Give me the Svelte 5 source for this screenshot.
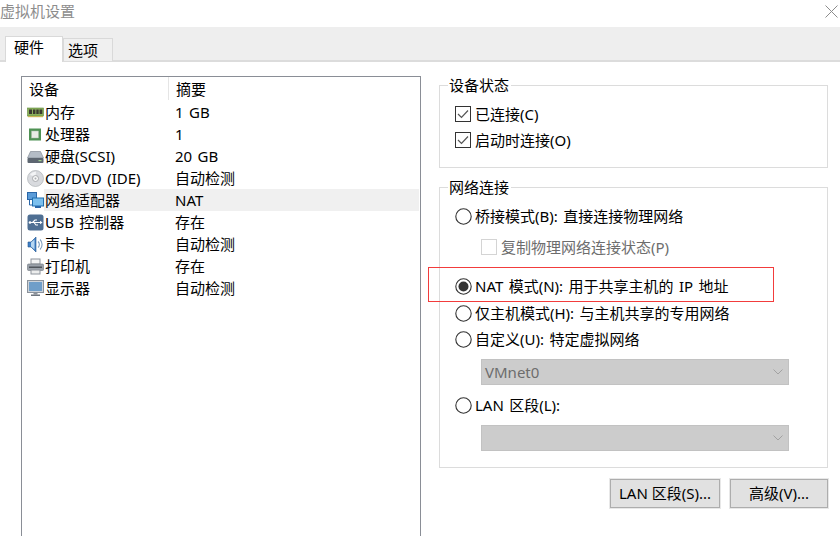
<script>
	const devices = [
		{ icon: 'memory', name: '内存', summary: '1 GB' },
		{ icon: 'cpu', name: '处理器', summary: '1' },
		{ icon: 'disk', name: '硬盘(SCSI)', summary: '20 GB' },
		{ icon: 'cd', name: 'CD/DVD (IDE)', summary: '自动检测' },
		{ icon: 'net', name: '网络适配器', summary: 'NAT', selected: true },
		{ icon: 'usb', name: 'USB 控制器', summary: '存在' },
		{ icon: 'sound', name: '声卡', summary: '自动检测' },
		{ icon: 'printer', name: '打印机', summary: '存在' },
		{ icon: 'display', name: '显示器', summary: '自动检测' }
	];
</script>

{#snippet check()}
	<svg class="box" width="16" height="16" viewBox="0 0 16 16">
		<rect x="0.5" y="0.5" width="15" height="15" fill="#fff" stroke="#333" />
		<path d="M3 8l3.5 3.5L13 4.5" fill="none" stroke="#555" stroke-width="1.2" />
	</svg>
{/snippet}

{#snippet radio(on)}
	<svg class="radio" width="17" height="17" viewBox="0 0 17 17">
		<circle cx="8.5" cy="8.5" r="7.7" fill="#fff" stroke="#333" stroke-width="1.1" />
		{#if on}<circle cx="8.5" cy="8.5" r="5" fill="#333" />{/if}
	</svg>
{/snippet}

{#snippet chevron()}
	<svg class="chev" width="10" height="6" viewBox="0 0 10 6">
		<path d="M0.5 0.5L5 5l4.5-4.5" fill="none" stroke="#a2a2a2" />
	</svg>
{/snippet}

{#snippet deviceIcon(kind)}
	<svg class="dev-icon" width="17" height="17" viewBox="0 0 17 17">
		{#if kind === 'memory'}
			<rect x="0.5" y="4" width="16" height="8" fill="#8bb05c" stroke="#5f8a3a" stroke-width="0.6" />
			<rect x="2" y="5.5" width="3" height="4.5" fill="#3a3a30" />
			<rect x="6" y="5.5" width="2.4" height="4.5" fill="#3a3a30" />
			<rect x="9.3" y="5.5" width="2.4" height="4.5" fill="#3a3a30" />
			<rect x="12.5" y="5.5" width="2.8" height="4.5" fill="#3a3a30" />
			<rect x="1" y="12" width="15" height="1.2" fill="#c9b455" />
		{:else if kind === 'cpu'}
			<rect x="2" y="2.5" width="12" height="12" fill="#4f9254" />
			<rect x="4.5" y="5" width="7" height="7" fill="#e9ece6" stroke="#a9bba6" stroke-width="0.5" />
		{:else if kind === 'disk'}
			<path d="M3.5 3.5h10L16.5 10H0.5z" fill="#b4bcc6" stroke="#77808c" stroke-width="0.6" />
			<rect x="0.5" y="10" width="16" height="5" rx="1" fill="#5d6671" />
			<rect x="11.5" y="12" width="3" height="1.2" fill="#9fd08a" />
		{:else if kind === 'cd'}
			<circle cx="8.5" cy="8.5" r="8" fill="#d8dade" stroke="#aeb1b6" stroke-width="0.7" />
			<path d="M3 5a7 7 0 0 1 6-3.2l-.5 5z" fill="#f3f4f6" />
			<circle cx="8.5" cy="8.5" r="3" fill="#f7f7f7" stroke="#9a9da2" stroke-width="0.8" />
			<circle cx="8.5" cy="8.5" r="1" fill="#a9acb1" />
		{:else if kind === 'net'}
			<rect x="0.5" y="0.5" width="9" height="7" fill="#5a9bd8" stroke="#2a66a8" />
			<rect x="5.5" y="6" width="11" height="8" fill="#7cc0ee" stroke="#1f6fb0" />
			<rect x="8" y="14" width="6" height="2" fill="#2a66a8" />
			<path d="M2.5 8v5h3" fill="none" stroke="#2a66a8" />
		{:else if kind === 'usb'}
			<rect x="0.5" y="0.5" width="16" height="16" rx="2.5" fill="#4f6f93" />
			<path d="M2.5 8.5h11M5.5 8.5l2.5-2.5h2M7 8.5l2 2.5h2" fill="none" stroke="#fff" stroke-width="1.1" />
			<path d="M13 6.8l2.5 1.7L13 10.2z" fill="#fff" />
			<circle cx="3" cy="8.5" r="1.3" fill="#fff" />
		{:else if kind === 'sound'}
			<path d="M1 6h3l5-5v15l-5-5H1z" fill="#3f7fc6" stroke="#24568f" stroke-width="0.6" />
			<path d="M4 6.5l3.5-3v10l-3.5-3z" fill="#b7d7f2" />
			<path d="M11 5.5a4 4 0 0 1 0 6M13 3.5a7 7 0 0 1 0 10" fill="none" stroke="#7f9fc0" stroke-width="1.1" />
		{:else if kind === 'printer'}
			<rect x="4" y="1" width="9" height="5" fill="#f2f3f4" stroke="#8e949c" />
			<rect x="0.5" y="6" width="16" height="6.5" rx="1" fill="#9aa1aa" stroke="#6f757d" stroke-width="0.6" />
			<rect x="2" y="8.5" width="13" height="1.5" fill="#4f555c" />
			<rect x="4" y="12" width="9" height="4" fill="#eceded" stroke="#8e949c" />
		{:else if kind === 'display'}
			<rect x="0.5" y="0.5" width="16" height="12" fill="#cdd3da" stroke="#8b929b" />
			<rect x="2" y="2" width="13" height="9" fill="#6f9ec9" />
			<rect x="6.5" y="13" width="4" height="1.5" fill="#8b929b" />
			<rect x="4" y="14.5" width="9" height="1.5" fill="#6e757e" />
		{/if}
	</svg>
{/snippet}

<div class="dialog">
	<header class="title-bar">
		<span class="title">虚拟机设置</span>
		<svg class="close" width="13" height="13" viewBox="0 0 13 13">
			<path d="M0.5 0.5l12 12M12.5 0.5l-12 12" stroke="#8c8c8c" fill="none" />
		</svg>
	</header>

	<div class="tabs">
		<div class="tab active">硬件</div>
		<div class="tab">选项</div>
	</div>

	<div class="body">
		<div class="device-list">
			<div class="list-head">
				<span class="col-name">设备</span>
				<span class="col-summary">摘要</span>
			</div>
			{#each devices as d}
				<div class="row">
					{@render deviceIcon(d.icon)}
					<div class="row-text" class:selected={d.selected}>
						<span class="row-name">{d.name}</span>
						<span class="row-summary">{d.summary}</span>
					</div>
				</div>
			{/each}
		</div>

		<div class="side">
			<fieldset class="status">
				<legend>设备状态</legend>
				<div class="opt">{@render check()}<span>已连接(C)</span></div>
				<div class="opt next">{@render check()}<span>启动时连接(O)</span></div>
			</fieldset>

			<fieldset class="network">
				<legend>网络连接</legend>
				<div class="opt">{@render radio(false)}<span>桥接模式(B): 直接连接物理网络</span></div>
				<div class="opt sub">
					<span class="box-off"></span><span class="disabled">复制物理网络连接状态(P)</span>
				</div>
				<div class="opt nat">{@render radio(true)}<span>NAT 模式(N): 用于共享主机的 IP 地址</span></div>
				<div class="opt host">{@render radio(false)}<span>仅主机模式(H): 与主机共享的专用网络</span></div>
				<div class="opt next">{@render radio(false)}<span>自定义(U): 特定虚拟网络</span></div>
				<div class="select first"><span>VMnet0</span>{@render chevron()}</div>
				<div class="opt lan">{@render radio(false)}<span>LAN 区段(L):</span></div>
				<div class="select second"><span></span>{@render chevron()}</div>
			</fieldset>

			<div class="buttons">
				<button class="lan-btn">LAN 区段(S)...</button>
				<button class="adv-btn">高级(V)...</button>
			</div>
		</div>
	</div>

	<div class="marker"></div>
</div>

<style>
	:global(body) {
		margin: 0;
		background: #fff;
	}

	.dialog {
		position: relative;
		width: 840px;
		height: 536px;
		overflow: hidden;
		background: #fff;
		color: #000;
		font-family: "Noto Sans", "Noto Sans CJK SC", sans-serif;
		font-size: 15px;
		word-spacing: 1.5px;
		line-height: 22px;
	}

	.title-bar {
		height: 27px;
		display: flex;
		align-items: center;
		justify-content: space-between;
		padding: 0 2px 5px 0;
		box-sizing: border-box;
	}

	.title {
		color: #8d8d8d;
		font-size: 15px;
	}

	.close {
		display: block;
	}

	.tabs {
		height: 35px;
		box-sizing: border-box;
		background: #eee;
		border-bottom: 2px solid #dcdcdc;
		display: flex;
		align-items: flex-end;
		padding-left: 5px;
	}

	.tab {
		width: 50px;
		height: 23px;
		box-sizing: border-box;
		background: #f0f0f0;
		border: 1px solid #d9d9d9;
		border-bottom: none;
		margin-bottom: -1px;
		padding-left: 4px;
		line-height: 22px;
	}

	.tab.active {
		width: 58px;
		height: 26px;
		background: #fff;
		margin-bottom: -2px;
		padding-left: 8px;
		line-height: 21px;
		position: relative;
	}

	.body {
		display: flex;
		padding: 14px 0 0 21px;
	}

	.device-list {
		width: 400px;
		height: 470px;
		flex: none;
		box-sizing: border-box;
		border: 1px solid #8a8e96;
	}

	.list-head {
		display: flex;
		height: 24px;
		line-height: 25px;
	}

	.col-name {
		width: 139px;
		padding-left: 7px;
		border-right: 1px solid #e5e5e5;
		height: 23px;
	}

	.col-summary {
		padding-left: 7px;
	}

	.row {
		display: flex;
		align-items: center;
		height: 22px;
		padding-left: 5px;
	}

	.dev-icon {
		flex: none;
	}

	.row-text {
		flex: 1;
		display: flex;
		height: 22px;
		margin-right: 1px;
		padding-left: 1px;
	}

	.row-text.selected {
		background: #f0f0f0;
	}

	.row-name {
		width: 130px;
		white-space: nowrap;
	}

	.row-summary {
		white-space: nowrap;
	}

	.side {
		width: 389px;
		margin-left: 18px;
		flex: none;
		padding-top: 2px;
	}

	fieldset {
		margin: 0;
		padding: 0 0 0 15px;
		border: 1px solid #dcdcdc;
		box-sizing: border-box;
		min-width: 0;
	}

	legend {
		margin-left: -7px;
		padding: 0 2px 0 1px;
		line-height: 18px;
	}

	.status {
		height: 92px;
		margin-top: -2px;
	}

	.network {
		height: 290px;
		margin-top: 10px;
	}

	.opt {
		display: flex;
		align-items: center;
		height: 22px;
		white-space: nowrap;
	}

	.status .opt:first-of-type {
		margin-top: 9px;
	}

	.opt.next {
		margin-top: 4px;
	}

	.box, .radio {
		flex: none;
		margin-right: 4px;
		display: block;
	}

	.radio {
		margin-right: 3px;
	}

	.network > .opt:first-of-type {
		margin-top: 9px;
	}

	.opt.sub {
		margin-top: 9px;
		padding-left: 26px;
	}

	.box-off {
		width: 14px;
		height: 14px;
		flex: none;
		border: 1px solid #d4d4d4;
		background: #fff;
		margin-right: 4px;
	}

	.disabled {
		color: #6d6d6d;
	}

	.opt.nat {
		margin-top: 17px;
	}

	.opt.host {
		margin-top: 5px;
	}

	.select {
		display: flex;
		align-items: center;
		justify-content: space-between;
		box-sizing: border-box;
		width: 308px;
		height: 26px;
		margin-left: 26px;
		padding: 0 5px 0 3px;
		background: #ccc;
		border: 1px solid #c2c2c2;
		color: #6d6d6d;
	}

	.select.first {
		margin-top: 9px;
	}

	.select.second {
		margin-top: 9px;
	}

	.opt.lan {
		margin-top: 9px;
	}

	.chev {
		display: block;
	}

	.buttons {
		display: flex;
		justify-content: flex-end;
		gap: 10px;
		margin-top: 11px;
	}

	button {
		height: 29px;
		box-sizing: border-box;
		padding: 0;
		background: #e1e1e1;
		border: 1px solid #adadad;
		box-shadow: 0 0 0 1px #e8e8e8;
		font: inherit;
		color: #000;
		line-height: 25px;
	}

	.lan-btn {
		width: 110px;
	}

	.adv-btn {
		width: 98px;
	}

	.marker {
		position: absolute;
		left: 428px;
		top: 267px;
		width: 344px;
		height: 33px;
		border: 1px solid #f23c3c;
	}
</style>
